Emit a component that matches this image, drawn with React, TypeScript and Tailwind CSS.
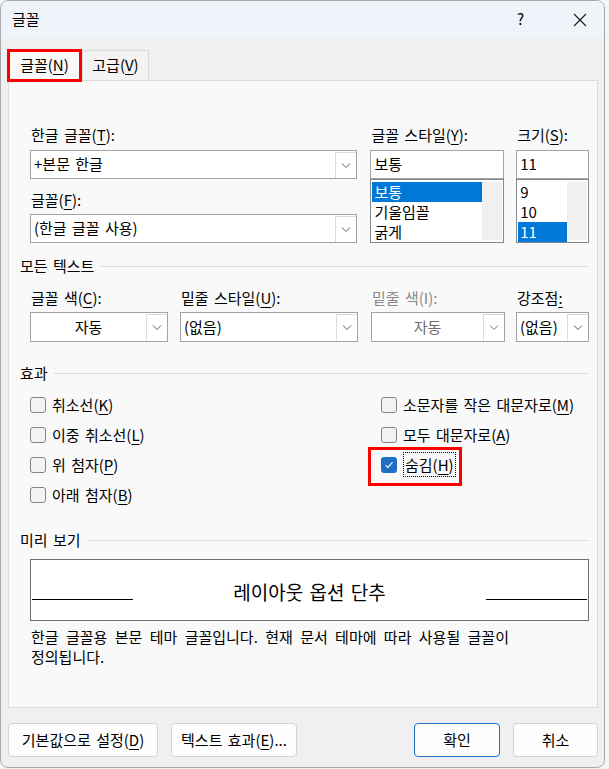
import React from "react"

function U({ children }: { children: React.ReactNode }) {
  return <span className="underline underline-offset-[3px] decoration-1">{children}</span>
}

function Chevron({ muted }: { muted?: boolean }) {
  return (
    <svg width="10" height="6" viewBox="0 0 10 6" className={muted ? "text-[#7a7a7a]" : "text-[#5a5a5a]"}>
      <path d="M1 0.5l4 4 4-4" fill="none" stroke="currentColor" strokeWidth="1" />
    </svg>
  )
}

function Combo({
  value,
  className,
  center,
  disabled,
}: {
  value: string
  className: string
  center?: boolean
  disabled?: boolean
}) {
  return (
    <div className={`flex bg-white border border-[#a3a3a3] ${className}`}>
      <div
        className={`flex-1 flex items-center px-[3px] whitespace-nowrap ${center ? "justify-center" : ""} ${
          disabled ? "text-[#6e6e6e]" : ""
        }`}
      >
        {value}
      </div>
      <div className="w-[21px] mt-[1px] border-l border-t border-[#dcdcdc] bg-white flex items-center justify-center">
        <Chevron muted={disabled} />
      </div>
    </div>
  )
}

function SectionHeader({ title }: { title: string }) {
  return (
    <div className="flex items-center h-[20px]">
      <span className="leading-[20px]">{title}</span>
      <div className="flex-1 h-px bg-[#dcdcdc] ml-[6px]" />
    </div>
  )
}

function Check({ label, checked }: { label: React.ReactNode; checked?: boolean }) {
  return (
    <div className="flex items-center h-[30px] gap-[6px]">
      {checked ? (
        <div className="w-[16px] h-[16px] rounded-[3px] bg-[#1f6fc5] flex items-center justify-center">
          <svg width="10" height="8" viewBox="0 0 10 8">
            <path d="M1.5 4.2l2.3 2.2 4.7-5" fill="none" stroke="white" strokeWidth="1.1" />
          </svg>
        </div>
      ) : (
        <div className="w-[16px] h-[16px] rounded-[3px] border border-[#858585] bg-[#f3f3f3]" />
      )}
      <span className="leading-[20px] whitespace-nowrap">{label}</span>
    </div>
  )
}

function ListBox({ items, selected, rowWidth }: { items: string[]; selected: number; rowWidth: string }) {
  return (
    <div className="h-[64px] bg-white border border-[#828790] flex p-[1px]">
      <div className={`${rowWidth} pt-[1px]`}>
        {items.map((it, i) => (
          <div
            key={it}
            className={`h-[20px] leading-[20px] pl-[2px] ${i === selected ? "bg-[#0078d7] text-white" : ""}`}
          >
            {it}
          </div>
        ))}
      </div>
      <div className="flex-1 bg-[#f0f0f0] my-[1px]" />
    </div>
  )
}

function Button({ children, className, primary }: { children: React.ReactNode; className: string; primary?: boolean }) {
  return (
    <div
      className={`h-[34px] rounded-[4px] flex items-center justify-center bg-[#fdfdfd] whitespace-nowrap ${
        primary ? "border border-[#1f6fc5]" : "border border-[#d3d3d3]"
      } ${className}`}
    >
      {children}
    </div>
  )
}

export default function App() {
  return (
    <div className="w-[609px] h-[769px] bg-[#f5f5f5] font-['Malgun_Gothic','Noto_Sans_CJK_KR',sans-serif] text-[15px] [word-spacing:2px] text-black">
      <div className="w-[605px] h-[768px] rounded-[8px] border border-[#a9a9a9] bg-[#f0f0f0] overflow-hidden flex flex-col">
        {/* title bar */}
        <div className="h-[37px] bg-[#eef4fa] flex items-center pl-[11px] pr-[17px]">
          <span>글꼴</span>
          <span className="ml-auto text-[15px] mr-[49px]">?</span>
          <svg width="14" height="14" viewBox="0 0 14 14">
            <path d="M1 1l12 12M13 1L1 13" stroke="#1a1a1a" strokeWidth="1.1" />
          </svg>
        </div>

        <div className="px-[6px] pt-[11px]">
          {/* tabs */}
          <div className="flex items-start h-[31px] relative z-10">
            <div className="w-[75px] h-[33px] border-[3px] border-[#ff0000] bg-[#f9f9f9] flex items-center justify-center">
              글꼴(<U>N</U>)
            </div>
            <div className="w-[67px] h-[30px] mt-[1px] border border-b-0 border-[#dadada] bg-[#f3f3f3] flex items-center justify-center">
              고급(<U>V</U>)
            </div>
          </div>

          {/* panel */}
          <div className="ml-[1px] w-[590px] h-[628px] border border-[#dadada] bg-[#f9f9f9] pt-[44px] pl-[11px] pr-[8px]">
            {/* font selection */}
            <div className="ml-[10px] flex gap-[12px]">
              <div className="w-[328px] flex flex-col">
                <div className="leading-[20px] pl-[1px]">
                  한글 글꼴(<U>T</U>):
                </div>
                <Combo value="+본문 한글" className="h-[29px] mt-[5px]" />
                <div className="leading-[20px] pl-[1px] mt-[11px]">
                  글꼴(<U>F</U>):
                </div>
                <Combo value="(한글 글꼴 사용)" className="h-[29px] mt-[4px]" />
              </div>
              <div className="w-[134px] flex flex-col ml-[1px]">
                <div className="leading-[20px] pl-[1px] whitespace-nowrap">
                  글꼴 스타일(<U>Y</U>):
                </div>
                <div className="h-[29px] mt-[5px] bg-white border border-[#a3a3a3] flex items-center px-[3px]">보통</div>
                <ListBox items={["보통", "기울임꼴", "굵게"]} selected={0} rowWidth="w-[110px]" />
              </div>
              <div className="w-[73px] flex flex-col">
                <div className="leading-[20px] pl-[1px]">
                  크기(<U>S</U>):
                </div>
                <div className="h-[29px] mt-[5px] bg-white border border-[#a3a3a3] flex items-center px-[3px]">11</div>
                <ListBox items={["9", "10", "11"]} selected={2} rowWidth="w-[49px]" />
              </div>
            </div>

            {/* all text */}
            <div className="mt-[13px]">
              <SectionHeader title="모든 텍스트" />
            </div>
            <div className="ml-[10px] mt-[12px] flex">
              <div className="w-[138px]">
                <div className="leading-[20px] pl-[1px]">
                  글꼴 색(<U>C</U>):
                </div>
                <Combo value="자동" center className="h-[30px] mt-[4px]" />
              </div>
              <div className="w-[178px] ml-[12px]">
                <div className="leading-[20px] pl-[1px]">
                  밑줄 스타일(<U>U</U>):
                </div>
                <Combo value="(없음)" className="h-[30px] mt-[4px]" />
              </div>
              <div className="w-[134px] ml-[13px]">
                <div className="leading-[20px] pl-[1px] text-[#8a8a8a]">밑줄 색(I):</div>
                <Combo value="자동" center disabled className="h-[30px] mt-[4px]" />
              </div>
              <div className="w-[73px] ml-[11px]">
                <div className="leading-[20px] pl-[1px]">
                  강조점<U>:</U>
                </div>
                <Combo value="(없음)" className="h-[30px] mt-[4px]" />
              </div>
            </div>

            {/* effects */}
            <div className="mt-[21px]">
              <SectionHeader title="효과" />
            </div>
            <div className="ml-[10px] mt-[7px] grid grid-cols-[351px_1fr]">
              <div className="flex flex-col">
                <Check label={<>취소선(<U>K</U>)</>} />
                <Check label={<>이중 취소선(<U>L</U>)</>} />
                <Check label={<>위 첨자(<U>P</U>)</>} />
                <Check label={<>아래 첨자(<U>B</U>)</>} />
              </div>
              <div className="flex flex-col">
                <Check label={<>소문자를 작은 대문자로(<U>M</U>)</>} />
                <Check label={<>모두 대문자로(<U>A</U>)</>} />
                <div className="relative">
                  <Check
                    checked
                    label={
                      <span className="border border-dotted border-black px-[1px] py-[1px]">
                        숨김(<U>H</U>)
                      </span>
                    }
                  />
                  <div className="absolute -left-[13px] -top-[3px] w-[94px] h-[39px] border-[3px] border-[#ff0000]" />
                </div>
              </div>
            </div>

            {/* preview */}
            <div className="mt-[20px]">
              <SectionHeader title="미리 보기" />
            </div>
            <div className="ml-[10px] mt-[9px] h-[62px] bg-white border border-[#6f6f6f] grid grid-cols-[101px_1fr_101px] px-[1px]">
              <div className="h-px bg-black mt-[39px]" />
              <div className="text-center text-[19px] leading-[24px] mt-[20px]">레이아웃 옵션 단추</div>
              <div className="h-px bg-black mt-[39px]" />
            </div>
            <div className="ml-[11px] mt-[6px] leading-[20px] w-[550px] whitespace-nowrap [word-spacing:4px]">
              한글 글꼴용 본문 테마 글꼴입니다. 현재 문서 테마에 따라 사용될 글꼴이
              <br />
              정의됩니다.
            </div>
          </div>

          {/* buttons */}
          <div className="mt-[15px] flex pl-[1px]">
            <Button className="w-[150px]">
              기본값으로 설정(<U>D</U>)
            </Button>
            <Button className="w-[126px] ml-[13px]">
              텍스트 효과(<U>E</U>)...
            </Button>
            <Button primary className="w-[86px] ml-auto">
              확인
            </Button>
            <Button className="w-[85px] ml-[13px]">취소</Button>
          </div>
        </div>
      </div>
    </div>
  )
}
